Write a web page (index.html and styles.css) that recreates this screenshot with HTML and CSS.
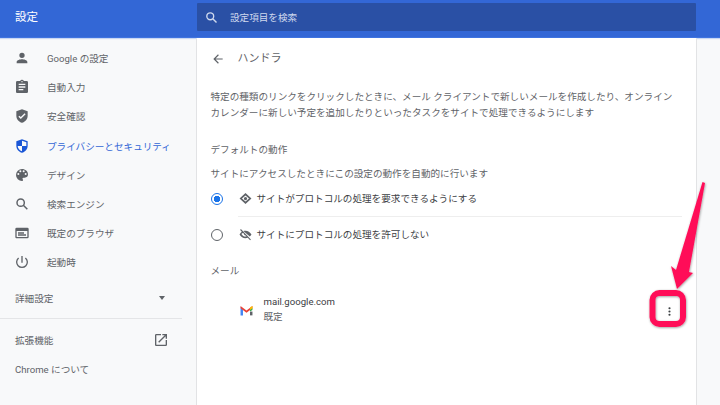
FILE: index.html
```html
<!DOCTYPE html>
<html lang="ja">
<head>
<meta charset="utf-8">
<title>設定</title>
<link rel="stylesheet" href="styles.css">
</head>
<body>
<header class="top">
  <div class="brand">設定</div>
  <div class="search">
    <svg class="search-icon" viewBox="0 0 24 24"><circle cx="10" cy="10" r="5.500"/><path d="M14 14l6 6"/></svg>
    <span>設定項目を検索</span>
  </div>
</header>
<div class="body">
  <nav class="side">
    <ul class="menu">
      <li class="item"><svg class="ico" viewBox="0 0 24 24"><path d="M12 12a4 4 0 1 0 0-8 4 4 0 0 0 0 8zm0 2c-2.700 0-8 1.300-8 4v2h16v-2c0-2.700-5.300-4-8-4z"/></svg>Google の設定</li>
      <li class="item"><svg class="ico" viewBox="0 0 24 24"><path d="M19 3h-4.200a3 3 0 0 0-5.600 0H5a2 2 0 0 0-2 2v14c0 1.100.9 2 2 2h14a2 2 0 0 0 2-2V5a2 2 0 0 0-2-2zm-7 0a1 1 0 1 1 0 2 1 1 0 0 1 0-2zm2 14H7v-2h7v2zm3-4H7v-2h10v2zm0-4H7V7h10v2z"/></svg>自動入力</li>
      <li class="item"><svg class="ico" viewBox="0 0 24 24"><path d="M12 2 3.500 5v6.500c0 5 3.600 9.500 8.500 10.500 4.900-1 8.500-5.500 8.500-10.500V5L12 2zm-1.800 14.500L6.600 13l1.500-1.500 2.100 2.100 5.700-5.700 1.500 1.500-7.200 7.100z"/></svg>安全確認</li>
      <li class="item active"><svg class="ico" viewBox="0 0 24 24"><path d="M12 2 3.500 5v6.500c0 5 3.600 9.500 8.500 10.500 4.900-1 8.500-5.500 8.500-10.500V5L12 2zm0 2.200 6.500 2.200V12H12v7.900c-3.600-1-6.200-4.300-6.500-7.900H12V4.200z"/></svg>プライバシーとセキュリティ</li>
      <li class="item"><svg class="ico" viewBox="0 0 24 24"><path d="M12 3a9 9 0 0 0 0 18 1.500 1.500 0 0 0 1.100-2.500 1.500 1.500 0 0 1 1.100-2.500H16a5 5 0 0 0 5-5c0-4.400-4-8-9-8zM6.500 12a1.500 1.500 0 1 1 0-3 1.500 1.500 0 0 1 0 3zm3-4a1.500 1.500 0 1 1 0-3 1.500 1.500 0 0 1 0 3zm5 0a1.500 1.500 0 1 1 0-3 1.500 1.500 0 0 1 0 3zm3 4a1.500 1.500 0 1 1 0-3 1.500 1.500 0 0 1 0 3z"/></svg>デザイン</li>
      <li class="item"><svg class="ico ico-line" viewBox="0 0 24 24"><circle cx="10" cy="10" r="5.500"/><path d="M14 14l6 6"/></svg>検索エンジン</li>
      <li class="item"><svg class="ico" viewBox="0 0 24 24"><path d="M20 4H4a2 2 0 0 0-2 2v12c0 1.100.9 2 2 2h16a2 2 0 0 0 2-2V6a2 2 0 0 0-2-2zm0 14H4V9h16v9zm-5-7H6v2h9v-2zm3 3H6v2h12v-2z"/></svg>既定のブラウザ</li>
      <li class="item"><svg class="ico" viewBox="0 0 24 24"><path d="M13 3h-2v10h2V3zm4.800 2.200-1.400 1.400A7 7 0 1 1 7.600 6.600L6.200 5.200a9 9 0 1 0 11.600 0z"/></svg>起動時</li>
    </ul>
    <div class="plain advanced"><span>詳細設定</span><i class="caret"></i></div>
    <hr class="side-rule">
    <div class="plain ext"><span>拡張機能</span>
      <svg class="ico ext-ico" viewBox="0 0 24 24"><path d="M19 19H5V5h7V3H5a2 2 0 0 0-2 2v14c0 1.100.9 2 2 2h14a2 2 0 0 0 2-2v-7h-2v7zM14 3v2h3.600l-9.800 9.800 1.400 1.400L19 6.400V10h2V3h-7z"/></svg>
    </div>
    <div class="plain">Chrome について</div>
  </nav>
  <main class="card">
    <div class="title-row">
      <svg class="back" viewBox="0 0 24 24"><path d="M20 11H7.800l5.600-5.600L12 4l-8 8 8 8 1.400-1.400L7.800 13H20v-2z"/></svg>
      <h1 class="title">ハンドラ</h1>
    </div>
    <p class="desc">特定の種類のリンクをクリックしたときに、メール クライアントで新しいメールを作成したり、オンライン<br>カレンダーに新しい予定を追加したりといったタスクをサイトで処理できるようにします</p>
    <h2 class="head default-head">デフォルトの動作</h2>
    <p class="sub">サイトにアクセスしたときにこの設定の動作を自動的に行います</p>
    <div class="radio-row first">
      <span class="radio on"></span>
      <svg class="perm" viewBox="0 0 24 24"><path d="M12 2 1 12l11 10 11-10L12 2zm0 4.500L18.500 12 12 17.500 5.500 12 12 6.500zM12 9a3 3 0 1 0 0 6 3 3 0 0 0 0-6z"/></svg>
      <span class="radio-text">サイトがプロトコルの処理を要求できるようにする</span>
    </div>
    <div class="radio-row ruled">
      <span class="radio"></span>
      <svg class="perm" viewBox="0 0 24 24"><path d="M12 5c4.500 0 8.500 3 11 7-.8 1.400-1.800 2.600-3 3.600L8 5.600C9.300 5.200 10.600 5 12 5zM3.500 2 2 3.500l3.200 3.200C3.400 8 2 9.900 1 12c2.400 4.100 6.300 7 11 7 1.500 0 2.900-.3 4.200-.8l4.300 4.300 1.500-1.500L3.500 2zm4 7 1.700 1.700a3 3 0 0 0 3.100 3.100l1.700 1.700c-.6.200-1.300.4-2 .4-3 0-5.900-1.900-7.500-4.900.7-1 1.700-1.900 3-2z"/></svg>
      <span class="radio-text">サイトにプロトコルの処理を許可しない</span>
    </div>
    <h2 class="head mail-head">メール</h2>
    <div class="handler">
      <svg class="gmail" viewBox="0 0 24 24">
        <path fill="#4285f4" d="M1 5.500V21h4.500V10z"/>
        <path fill="#ea4335" d="M1 3.500 12 12l11-8.500V8l-11 8L1 8z"/>
        <path fill="#fbbc04" d="M18.500 6 23 3.500V9l-4.500 3z"/>
        <path fill="#34a853" d="M18.500 11 23 8v3l-4.500 3z"/>
        <path fill="#5f6368" d="M18.500 14H23v7h-4.500z"/>
      </svg>
      <div class="handler-text">
        <div class="host">mail.google.com</div>
        <div class="default">既定</div>
      </div>
      <svg class="kebab" viewBox="0 0 24 24"><circle cx="12" cy="6" r="2"/><circle cx="12" cy="12" r="2"/><circle cx="12" cy="18" r="2"/></svg>
    </div>
  </main>
</div>
<svg class="callout" viewBox="0 0 720 405">
  <defs><filter id="sh" x="-20%" y="-20%" width="140%" height="140%"><feDropShadow dx="0.500" dy="0.800" stdDeviation="1" flood-color="#000" flood-opacity="0.4"/></filter></defs>
  <g filter="url(#sh)">
    <rect x="652.500" y="293" width="30.500" height="31" rx="7" fill="none" stroke="#ff1158" stroke-width="6"/>
    <path fill="#ff1158" d="M702.500 182 705 183 689 272 693 273 677 289 671 266 676 270z"/>
  </g>
</svg>
</body>
</html>
```
FILE: styles.css
```css
* { box-sizing: border-box; }
html, body { margin: 0; padding: 0; height: 100%; }
body {
  width: 720px;
  height: 405px;
  overflow: hidden;
  background: #f8f9fa;
  color: #5f6368;
  font-family: Roboto, "Noto Sans CJK JP", sans-serif;
  font-size: 9.6px;
  display: flex;
  flex-direction: column;
  position: relative;
}
.top {
  height: 38px;
  flex: none;
  background: #3367d6;
  border-bottom: 1px solid #3f73e0;
  display: flex;
  align-items: flex-start;
  color: #fff;
  box-shadow: 0 1px 1px #c9d7f3;
}
.brand { width: 197px; padding: 9px 0 0 15px; font-size: 11.5px; line-height: 17px; }
.search {
  width: 499px;
  height: 28px;
  margin-top: 3px;
  background: #2a50a5;
  border-radius: 1px;
  display: flex;
  align-items: center;
  color: #cfd9ee;
}
.search-icon { width: 15px; height: 15px; margin: 0 11px 0 7px; fill: none; stroke: #cfd9ee; stroke-width: 2.2; }
.body { flex: 1; display: flex; min-height: 0; }
.side { width: 195px; flex: none; padding-top: 5.500px; }
.menu { list-style: none; margin: 0; padding: 0; }
.item { height: 29.200px; display: flex; align-items: center; padding-left: 14px; white-space: nowrap; }
.item.active { color: #3367d6; }
.ico { width: 16px; height: 16px; margin-right: 17px; fill: #5f6368; flex: none; }
.ico-line { fill: none; stroke: #5f6368; stroke-width: 2.2; }
.item.active .ico { fill: #1a56d6; }
.plain { height: 29.250px; padding-left: 15px; display: flex; align-items: center; }
.advanced { justify-content: space-between; padding-right: 30px; margin-top: 6px; }
.caret { border: 3.500px solid transparent; border-top: 4px solid #5f6368; border-bottom: 0; }
.side-rule { border: 0; border-top: 1px solid #e4e5e7; margin: 6px 13px 6px 0; }
.ext { justify-content: space-between; padding-right: 26px; margin-top: 0; }
.ext-ico { margin: 0; width: 16px; height: 16px; }
.card {
  width: 501px;
  flex: none;
  margin-left: 1px;
  background: #fff;
  border-left: 1.500px solid #e2e3e5;
  border-right: 1.500px solid #e2e3e5;
  padding: 0 14px 0 13.500px;
  line-height: 16px;
}
.title-row { display: flex; align-items: center; height: 40px; padding-top: 1px; }
.back { width: 14px; height: 14px; fill: #5f6368; margin-right: 13px; flex: none; }
.title { margin: 0; font-size: 11px; font-weight: 400; }
.desc { margin: 11px 0 0; white-space: nowrap; line-height: 16px; }
.head { margin: 0; font-size: 9.6px; font-weight: 400; }
.default-head { margin-top: 21px; }
.sub { margin: 8px 0 0; line-height: 16px; }
.radio-row {
  height: 36px;
  display: flex;
  align-items: center;
  color: #3c4043;
  position: relative;
}
.radio-row.first { height: 34.500px; margin-top: -0.500px; }
.radio-row.ruled { border-top: 1px solid #eeeeee; margin-left: 27px; }
.radio-row.ruled .radio { margin-left: -26.500px; }
.radio {
  width: 12px;
  height: 12px;
  border-radius: 50%;
  border: 1.500px solid #5f6368;
  flex: none;
  margin-right: 15.500px;
  margin-left: 0.500px;
}
.radio.on { border-color: #1a73e8; background: radial-gradient(circle, #1a73e8 0 3px, #fff 3.500px); }
.perm { width: 13px; height: 13px; fill: #5f6368; margin-right: 5px; flex: none; }
.radio-text { white-space: nowrap; }
.mail-head { margin-top: 10.500px; }
.handler {
  display: flex;
  align-items: center;
  margin-top: 13.500px;
  padding: 0 6px 0 29px;
  height: 33px;
}
.gmail { width: 13px; height: 13px; margin-top: 3px; flex: none; }
.handler-text { margin-left: 11px; flex: 1; line-height: 15px; }
.host { color: #3c4043; }
.default { color: #5f6368; }
.kebab { width: 13px; height: 13px; fill: #3c4043; flex: none; margin-top: 5px; }
.callout { position: absolute; left: 0; top: 0; width: 720px; height: 405px; pointer-events: none; }
```
